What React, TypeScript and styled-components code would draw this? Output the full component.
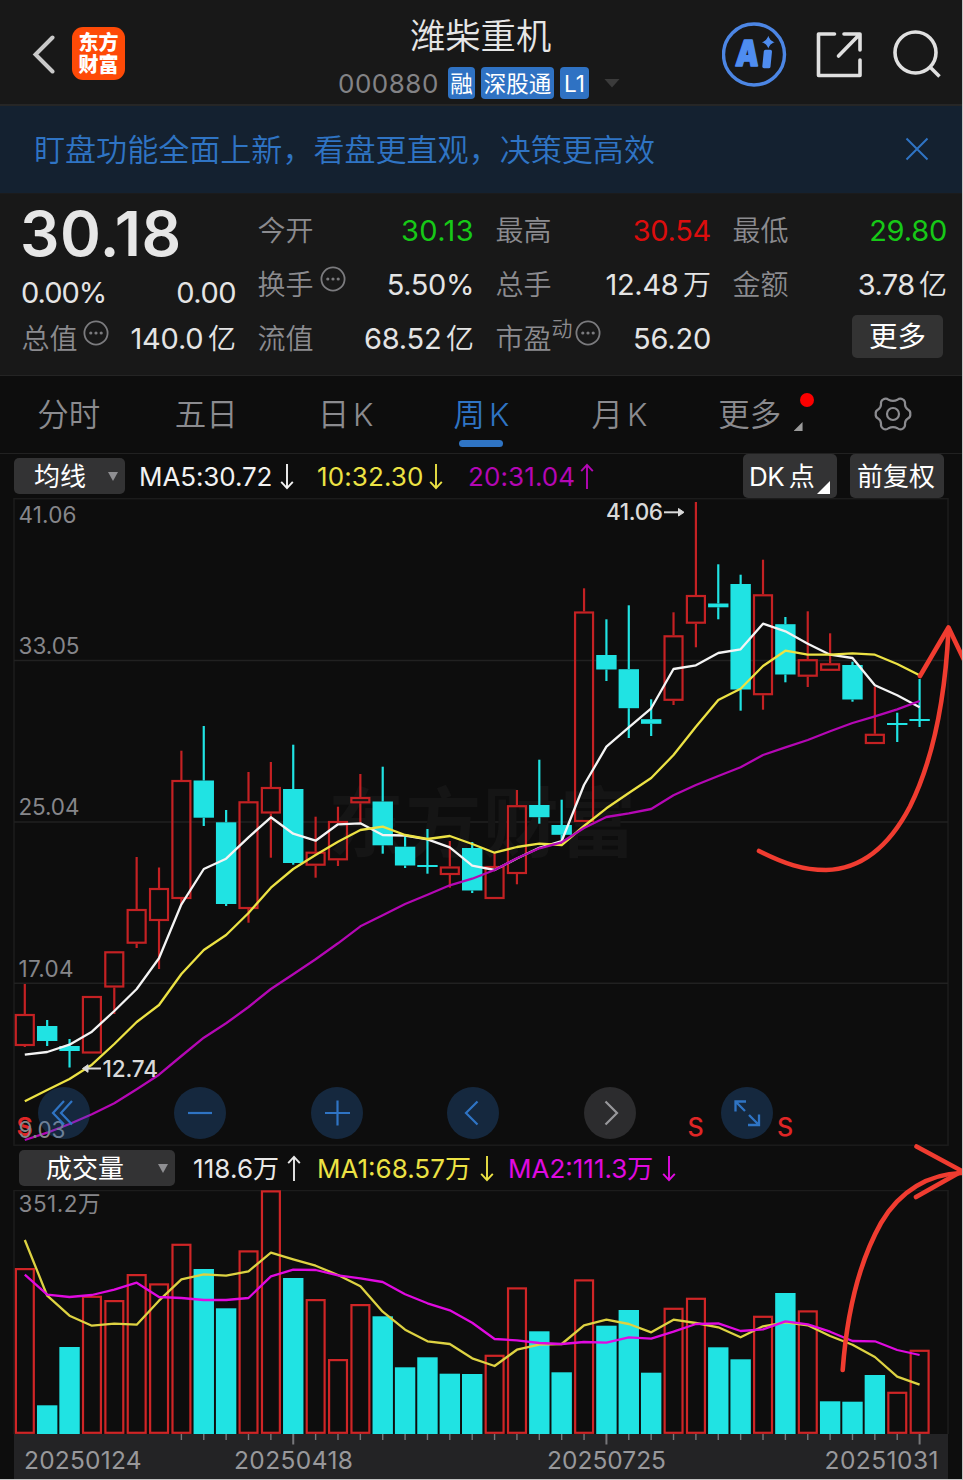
import React from "react";
import styled, { createGlobalStyle } from "styled-components";

const BLUE = "#2f74c4";
const GREY = "#8b8b8f";
const CYAN = "#20e3e3";
const YELLOW = "#ece244";
const MAGENTA = "#b407b4";
const FUCHSIA = "#e00ae0";
const LINE = "#212121";
const FONT = `Inter, "Noto Sans CJK SC", sans-serif`;

const GlobalStyle = createGlobalStyle`
  * { box-sizing: border-box; }
  body { margin: 0; background: #c4c4c4; }
`;

const Screen = styled.main`
  position: relative;
  display: flex;
  flex-direction: column;
  width: 962px;
  height: 1479px;
  overflow: hidden;
  background: #0d0d0d;
  color: #e6e6e6;
  font-family: ${FONT};
  white-space: nowrap;
`;

/* ---------- header ---------- */

const Header = styled.header`
  display: grid;
  grid-template-columns: 338px 1fr 240px;
  height: 106px;
  background: #181818;
  border-bottom: 2px solid #262626;
`;

const HeaderLeft = styled.div`
  display: flex;
  gap: 17px;
  padding: 27px 0 0 32px;
`;

const Logo = styled.div`
  display: flex;
  flex-direction: column;
  align-items: center;
  justify-content: center;
  width: 53px;
  height: 53px;
  padding-top: 1px;
  border-radius: 11px;
  background: #fe4a07;
  color: #fff;
  font-size: 20px;
  font-weight: 800;
  line-height: 22px;
`;

const Title = styled.h1`
  margin: 0;
  padding: 12px 0 0 72px;
  font-size: 35.3px;
  font-weight: 350;
  line-height: 50px;
`;

const SubTitle = styled.div`
  display: flex;
  align-items: center;
  height: 42px;
`;

const Code = styled.span`
  width: 110px;
  color: #838386;
  font-size: 26px;
  letter-spacing: 0.5px;
`;

const Badge = styled.span<{ $w: number }>`
  width: ${(p) => p.$w}px;
  height: 32px;
  margin-right: 6px;
  border-radius: 4px;
  background: #2f72c3;
  color: #fff;
  font-size: 22.5px;
  line-height: 33px;
  text-align: center;
`;

const HeaderRight = styled.div`
  display: flex;
  padding-top: 21px;
`;

/* ---------- banner ---------- */

const Banner = styled.div`
  display: flex;
  align-items: center;
  justify-content: space-between;
  height: 88px;
  padding: 0 33px 5px 34px;
  background: #142130;
  border-bottom: 1px solid #1b1b1c;
  color: ${BLUE};
  font-size: 31.05px;
  font-weight: 350;

  svg {
    margin-top: 4px;
  }
`;

/* ---------- quote ---------- */

const Quote = styled.section`
  display: grid;
  grid-template-columns: 214px 216px 215px 214px;
  column-gap: 22px;
  height: 182px;
  padding: 10px 0 0 22px;
  background: #181818;
  border-bottom: 1px solid #242424;
`;

const QuoteColumn = styled.div`
  display: flex;
  flex-direction: column;
`;

const Price = styled.div`
  height: 62px;
  margin-left: -2px;
  font-size: 62px;
  font-weight: 600;
  line-height: 60px;
  letter-spacing: 0.6px;
`;

const Row = styled.div<{ $h?: number }>`
  display: flex;
  align-items: center;
  height: ${(p) => p.$h ?? 54}px;
`;

const Label = styled.span`
  margin-left: -0.5px;
  color: ${GREY};
  font-size: 28px;
  font-weight: 350;
  line-height: 40px;
`;

const Value = styled.span<{ $color?: string; $track?: number }>`
  margin-left: auto;
  color: ${(p) => p.$color ?? "#e4e4e4"};
  font-size: 29px;
  line-height: 40px;
  letter-spacing: ${(p) => p.$track ?? -0.2}px;
`;

const Unit = styled.span`
  margin-left: 4.5px;
  font-size: 28px;
  font-weight: 350;
  line-height: 1;
  letter-spacing: 0;
`;

const Sup = styled.sup`
  align-self: flex-start;
  margin-top: 5px;
  color: ${GREY};
  font-size: 21px;
  font-weight: 350;
  line-height: 24px;
`;

const InfoIcon = styled.svg<{ $gap: number }>`
  width: 26px;
  height: 26px;
  margin: 0 0 12px ${(p) => p.$gap}px;
`;

const MoreButton = styled.button`
  width: 91px;
  height: 43px;
  margin: 0 4px 6px auto;
  padding: 0;
  border: 0;
  border-radius: 5px;
  background: #333;
  color: #fff;
  font: 400 28.5px/44px ${FONT};
`;

/* ---------- tabs ---------- */

const Tabs = styled.nav`
  display: flex;
  height: 78px;
  border-bottom: 1px solid ${LINE};
`;

const Tab = styled.div<{ $active?: boolean; $shift?: number }>`
  position: relative;
  flex: none;
  width: 137.43px;
  padding-left: ${(p) => p.$shift ?? 0}px;
  color: ${(p) => (p.$active ? BLUE : GREY)};
  font-size: 31.5px;
  font-weight: 350;
  line-height: 77px;
  text-align: center;
  word-spacing: -5px;
  ${(p) =>
    p.$active &&
    `&::after {
      content: "";
      position: absolute;
      left: 47px;
      bottom: 6px;
      width: 44px;
      height: 7px;
      border-radius: 4px;
      background: ${BLUE};
    }`}
`;

const Dot = styled.i`
  position: absolute;
  top: 17px;
  right: 11px;
  width: 14px;
  height: 14px;
  border-radius: 50%;
  background: #fb0000;
`;

const Corner = styled.i<{ $size: number; $right: number; $bottom: number; $color: string }>`
  position: absolute;
  right: ${(p) => p.$right}px;
  bottom: ${(p) => p.$bottom}px;
  width: ${(p) => p.$size}px;
  height: ${(p) => p.$size}px;
  background: ${(p) => p.$color};
  clip-path: polygon(100% 0, 100% 100%, 0 100%);
`;

/* ---------- indicator bars ---------- */

const IndicatorBar = styled.div<{ $h: number; $left: number }>`
  display: flex;
  align-items: center;
  height: ${(p) => p.$h}px;
  padding: 0 18px 0 ${(p) => p.$left}px;
`;

const Picker = styled.div<{ $w: number; $pad: number }>`
  display: flex;
  align-items: center;
  justify-content: space-between;
  width: ${(p) => p.$w}px;
  height: 36px;
  padding: 1px 7px 0 ${(p) => p.$pad}px;
  border-radius: 5px;
  background: #333334;
  color: #fff;
  font-size: 26px;
  line-height: 39px;
`;

const Caret = styled.i<{ $color: string; $w?: number }>`
  width: ${(p) => p.$w ?? 10}px;
  height: 9px;
  background: ${(p) => p.$color};
  clip-path: polygon(0 0, 100% 0, 50% 100%);
`;

const Reading = styled.div<{ $color: string; $w: number; $track?: number }>`
  display: flex;
  align-items: center;
  justify-content: space-between;
  width: ${(p) => p.$w}px;
  height: 36px;
  margin-left: 16px;
  padding-top: 2px;
  color: ${(p) => p.$color};
  font-size: 26px;
  line-height: 36px;
  letter-spacing: ${(p) => p.$track ?? -0.1}px;

  svg {
    margin-bottom: 2px;
  }
`;

const OptionButton = styled.div<{ $gap: string; $track?: number }>`
  position: relative;
  width: 94px;
  height: 44px;
  margin-left: ${(p) => p.$gap};
  padding-left: 7px;
  border-radius: 5px;
  background: #333334;
  color: #fff;
  font-size: 26px;
  line-height: 46px;
  word-spacing: -2px;
  letter-spacing: ${(p) => p.$track ?? 0}px;
`;

/* ---------- charts ---------- */

const PricePane = styled.section`
  position: relative;
  height: 648px;
`;

const Plot = styled.svg`
  display: block;
  width: 962px;
  font-family: ${FONT};
`;

const Controls = styled.div`
  position: absolute;
  left: 37.6px;
  top: 589px;
  display: flex;
  gap: 84.6px;
`;

const RoundButton = styled.div<{ $muted?: boolean }>`
  width: 52px;
  height: 52px;
  border-radius: 50%;
  background: ${(p) => (p.$muted ? "#2c2c2e" : "rgba(46, 116, 196, 0.27)")};
  color: ${(p) => (p.$muted ? "#98989b" : BLUE)};

  svg {
    display: block;
  }
`;

const Annotations = styled.svg`
  position: absolute;
  inset: 0;
  width: 962px;
  height: 1479px;
  pointer-events: none;
`;

/* ---------- data (vertical positions in screen pixels) ---------- */

type Candle = [up: 0 | 1, high: number, top: number, bottom: number, low: number];

const candles: Candle[] = [
  [1, 984, 1014, 1046, 1047], [0, 1020, 1026, 1041, 1046], [0, 1039, 1046, 1051, 1067.5],
  [1, 996, 996, 1053.5, 1053.5], [1, 951.3, 951.3, 987.5, 1014], [1, 857, 909, 943.7, 948],
  [1, 867.5, 888, 921, 969], [1, 750.7, 780, 899, 905], [0, 726, 780.5, 817.7, 826],
  [0, 810, 822.3, 904, 906], [1, 772, 801.3, 909, 922.7], [1, 762, 787, 813.5, 857.7],
  [0, 744.7, 789, 863, 864.7], [1, 816.7, 851.7, 865.7, 877.7], [1, 806.7, 821, 860.3, 866],
  [1, 774, 797, 803.3, 822.7], [0, 766.7, 801.5, 845.3, 853.7], [0, 836.7, 846.7, 865.5, 868],
  [0, 829, 865, 867, 873.7], [1, 841, 866.5, 875, 887.7], [0, 842, 848, 890.5, 893],
  [1, 853, 866, 899, 899], [1, 790, 805.2, 874, 884.3], [0, 759.7, 805, 817.2, 823.7],
  [0, 799.7, 825, 834.8, 840], [1, 588.3, 611.5, 822, 822], [0, 619.3, 655, 669.5, 681],
  [0, 605.3, 669.2, 708.2, 738], [0, 699.3, 719.2, 723.8, 736], [1, 612.3, 635.3, 700.8, 705],
  [1, 502, 595, 623.7, 647.3], [0, 564.3, 603.5, 607.3, 619.3], [0, 574.7, 584, 689.5, 710.7],
  [1, 559.7, 594.3, 695.2, 709.7], [0, 617, 624.2, 674.5, 682.3], [1, 611.3, 659.2, 676.7, 687],
  [1, 633.3, 663.3, 670.8, 670.8], [0, 661.7, 665, 699.5, 701.7], [1, 686.7, 733.8, 744, 744],
  [0, 712.7, 723, 725, 742], [0, 679, 719, 721, 727],
];

const ma5 = [1054.7, 1052, 1044.7, 1031.7, 1011, 989, 958.3, 904.3, 869, 858.7, 837.3, 817.3, 833.7, 840.7, 824.3, 823.3, 835, 835.5, 839.3, 847.3, 865.7, 870, 858.5, 847.8, 841, 785, 746.7, 727.3, 708.3, 669, 665.3, 653, 649.3, 623.7, 631.3, 643.7, 654.7, 658, 685.3, 695.3, 707.3];
const ma10 = [1101.3, 1090, 1079, 1064.7, 1044, 1022, 1005, 974, 950, 935, 913, 887.7, 869, 855, 841.7, 830, 826.7, 835, 839, 836, 844, 852.7, 847, 843.7, 845, 826, 808.3, 793, 778, 755, 726.7, 700, 688.7, 666, 650.7, 654.7, 654.7, 653.3, 654.7, 664, 675.3];
const ma20 = [1140, 1132.7, 1124, 1114.3, 1103.3, 1089.3, 1074.7, 1056, 1037.7, 1023.3, 1007, 989, 974.3, 959.3, 943.3, 926.3, 915.3, 904, 894.7, 885.3, 878.7, 870, 858.3, 848.3, 842.3, 828, 817, 813.3, 809, 795.3, 785, 776, 767.3, 755, 747.3, 740, 731.3, 723, 716.3, 709.3, 701];

const volumeTops = [1268, 1405.3, 1347, 1295.7, 1300, 1274, 1283.3, 1243.7, 1269, 1308.3, 1250.3, 1190.3, 1278, 1299, 1359, 1304, 1316.3, 1367.3, 1357.3, 1373.7, 1374, 1354.7, 1287.3, 1331.3, 1372.3, 1279.3, 1325.7, 1310, 1372.7, 1307.7, 1297.7, 1347.3, 1359.3, 1315.7, 1293, 1310.3, 1401.3, 1401.7, 1375, 1391.7, 1349.7];
const volumeUp = [0, 3, 4, 5, 6, 7, 10, 11, 13, 14, 15, 21, 22, 25, 29, 30, 33, 35, 39, 40];
const volMa1 = [1240, 1295.7, 1315.7, 1325.7, 1323.7, 1324.7, 1300.7, 1279.3, 1274.3, 1275.7, 1271.3, 1252.7, 1259.3, 1265.7, 1275, 1286.3, 1311.7, 1329.7, 1341.3, 1344, 1358.3, 1366, 1349.7, 1344.7, 1344, 1325.3, 1319.7, 1324, 1332.3, 1319.7, 1323, 1327.3, 1337.3, 1326.3, 1322.3, 1325.3, 1336, 1344.7, 1357, 1376.7, 1384.7];
const volMa2 = [1274.7, 1294.7, 1297, 1295, 1289.7, 1282.7, 1297, 1298, 1300, 1300, 1298, 1276.3, 1269.7, 1270, 1275.3, 1278.3, 1282, 1294.3, 1303.3, 1310.3, 1322.7, 1339, 1340.3, 1343, 1344, 1342, 1342.7, 1337.3, 1338.7, 1331.7, 1324, 1323.3, 1331, 1329.3, 1321.3, 1324.3, 1331.7, 1341, 1341.3, 1350, 1355];

const xAt = (i: number) => 24.8 + i * 22.37;

const Curve = ({ ys, color, width = 2.3 }: { ys: number[]; color: string; width?: number }) => (
  <polyline
    points={ys.map((y, i) => `${xAt(i).toFixed(1)},${y}`).join(" ")}
    fill="none"
    stroke={color}
    strokeWidth={width}
    strokeLinejoin="round"
  />
);

const CandleShape = ({ i, c }: { i: number; c: Candle }) => {
  const [up, high, top, bottom, low] = c;
  const x = xAt(i);
  const color = up ? "#c42123" : CYAN;
  return (
    <g stroke={color} strokeWidth={2.2}>
      {high < top && <line x1={x} x2={x} y1={high} y2={top} />}
      {low > bottom && <line x1={x} x2={x} y1={bottom} y2={low} />}
      {up ? (
        <rect x={x - 9} y={top + 1} width={18} height={Math.max(bottom - top - 2, 1)} fill="none" />
      ) : (
        <rect x={x - 10.2} y={top} width={20.4} height={bottom - top} fill={CYAN} stroke="none" />
      )}
    </g>
  );
};

type LabelProps = { x: number; y: number; w: number; children: string; color?: string; size?: number; weight?: number };
const PlotLabel = ({ x, y, w, children, color = "#86868a", size = 22.5, weight = 400 }: LabelProps) => (
  <text x={x} y={y} textLength={w} fill={color} fontSize={size} fontWeight={weight}>
    {children}
  </text>
);

const Trend = ({ up }: { up?: boolean }) => (
  <svg width="14" height="27" viewBox="0 0 14 27" fill="none" stroke="currentColor" strokeWidth="1.9">
    <path d={up ? "M7 26V2M1.2 8.2 7 1.8l5.8 6.4" : "M7 1v24M1.2 18.8 7 25.2l5.8-6.4"} />
  </svg>
);

const Info = ({ gap }: { gap: number }) => (
  <InfoIcon $gap={gap} viewBox="0 0 26 26" fill="none" stroke="#7b7b7e" strokeWidth="1.8">
    <circle cx="13" cy="13" r="11.6" />
    <g fill="#7b7b7e" stroke="none">
      <circle cx="7.8" cy="13" r="1.6" />
      <circle cx="13" cy="13" r="1.6" />
      <circle cx="18.2" cy="13" r="1.6" />
    </g>
  </InfoIcon>
);

const controls: { d: string; muted?: boolean; w?: number }[] = [
  { d: "M26 14 15 26l11 11.5M34 14 23 26l11 11.5" },
  { d: "M14 26h24" },
  { d: "M14 26h25M26.5 13.5v25" },
  { d: "M30.5 14.5 19 26l11.5 11.5" },
  { d: "M21.5 14.5 33 26 21.5 37.5", muted: true },
  { d: "M14.5 24.5V14.500H25M14.5 14.5 24 24M38 27.5V38H27M38 38 28 28", w: 2.3 },
];

export default function App() {
  return (
    <>
      <GlobalStyle />
      <Screen>
        <Header>
          <HeaderLeft>
            <svg width="23" height="54" viewBox="0 0 23 54" fill="none" stroke="#c9c9c9" strokeWidth="4">
              <path d="M20.500 10.500 3.500 27.500 20.500 44.500" strokeLinecap="round" />
            </svg>
            <Logo>
              <span>东方</span>
              <span>财富</span>
            </Logo>
          </HeaderLeft>
          <div>
            <Title>潍柴重机</Title>
            <SubTitle>
              <Code>000880</Code>
              <Badge $w={27}>融</Badge>
              <Badge $w={73}>深股通</Badge>
              <Badge $w={29}>L1</Badge>
              <Caret $color="#3b3b3b" $w={16} style={{ marginLeft: 9 }} />
            </SubTitle>
          </div>
          <HeaderRight>
            <svg width="240" height="68" viewBox="722 21 240 68" fill="none" stroke="#e0e0e0" strokeWidth="3.6">
              <circle cx="754" cy="54.500" r="30.500" stroke="#4c86e4" strokeWidth="3.400" />
              <g fill="#4f8df0" stroke="#4f8df0">
                <text fontSize="34" fontWeight="900" fontFamily="Inter" strokeWidth="1.500" strokeLinejoin="round" transform="translate(735 66) skewX(-4) scale(0.86 1.05)">
                  A
                </text>
                <path d="M765.500 51.500h4.800l-1.500 15h-4.800z" strokeWidth="3.400" strokeLinejoin="round" />
                <path d="M768.300 37.500q1.300 3.400 4.700 4.700-3.400 1.300-4.700 4.700-1.300-3.400-4.700-4.700 3.400-1.300 4.700-4.700z" strokeWidth="1.200" />
              </g>
              <path d="M834.500 34H818.500V75.500H860V60M844 34H860V50M859.500 34.500 838.500 56" strokeLinecap="round" strokeLinejoin="round" />
              <circle cx="915.500" cy="52.500" r="20.500" />
              <path d="M930.500 67.500 939.500 76.500" />
            </svg>
          </HeaderRight>
        </Header>

        <Banner>
          <span>盯盘功能全面上新，看盘更直观，决策更高效</span>
          <svg width="24" height="24" viewBox="0 0 24 24" stroke="currentColor" strokeWidth="2">
            <path d="M1.500 1.500l21 21M22.500 1.500l-21 21" />
          </svg>
        </Banner>

        <Quote>
          <QuoteColumn>
            <Price>30.18</Price>
            <Row $h={53}>
              <Value $track={-1} style={{ marginLeft: -1 }}>0.00%</Value>
              <Value $track={-0.5}>0.00</Value>
            </Row>
            <Row $h={39}>
              <Label>总值</Label>
              <Info gap={5} />
              <Value>140.0<Unit>亿</Unit></Value>
            </Row>
          </QuoteColumn>
          <QuoteColumn>
            <Row>
              <Label>今开</Label>
              <Value $color="#17c917" $track={0.4}>30.13</Value>
            </Row>
            <Row>
              <Label>换手</Label>
              <Info gap={6.5} />
              <Value $track={-0.4}>5.50%</Value>
            </Row>
            <Row>
              <Label>流值</Label>
              <Value>68.52<Unit>亿</Unit></Value>
            </Row>
          </QuoteColumn>
          <QuoteColumn>
            <Row>
              <Label>最高</Label>
              <Value $color="#dc0d0d" $track={-0.3}>30.54</Value>
            </Row>
            <Row>
              <Label>总手</Label>
              <Value $track={-0.3}>12.48<Unit>万</Unit></Value>
            </Row>
            <Row>
              <Label>市盈</Label>
              <Sup>动</Sup>
              <Info gap={2.5} />
              <Value>56.20</Value>
            </Row>
          </QuoteColumn>
          <QuoteColumn>
            <Row>
              <Label>最低</Label>
              <Value $color="#17c917">29.80</Value>
            </Row>
            <Row>
              <Label>金额</Label>
              <Value $track={-0.6}>3.78<Unit>亿</Unit></Value>
            </Row>
            <Row>
              <MoreButton>更多</MoreButton>
            </Row>
          </QuoteColumn>
        </Quote>

        <Tabs>
          <Tab>分时</Tab>
          <Tab>五日</Tab>
          <Tab $shift={4}>日 K</Tab>
          <Tab $active $shift={1}>周 K</Tab>
          <Tab $shift={2}>月 K</Tab>
          <Tab style={{ paddingRight: 12 }}>
            更多
            <Dot />
            <Corner $size={9} $right={22} $bottom={22} $color="#9a9a9a" />
          </Tab>
          <Tab>
            <svg width="38" height="36" viewBox="-19 -18 38 36" fill="none" stroke={GREY} strokeWidth="2.2" style={{ verticalAlign: "middle", marginTop: -6 }}>
              <path
                strokeLinejoin="round"
                d="M-4.500 -14.200Q0 -12 4.500 -14.200Q7 -16.500 10.200 -14.300Q12.500 -12.800 12 -9.500Q12.200 -6 15.200 -4.200Q17.600 -3 17.300 0Q17.600 3 15.200 4.200Q12.200 6 12 9.500Q12.500 12.800 10.200 14.300Q7 16.500 4.500 14.200Q0 12 -4.500 14.200Q-7 16.500 -10.200 14.300Q-12.500 12.800 -12 9.500Q-12.200 6 -15.200 4.200Q-17.600 3 -17.300 0Q-17.600 -3 -15.200 -4.200Q-12.200 -6 -12 -9.500Q-12.500 -12.800 -10.200 -14.300Q-7 -16.500 -4.500 -14.200Z"
              />
              <circle r="6" />
            </svg>
          </Tab>
        </Tabs>

        <IndicatorBar $h={44} $left={14}>
          <Picker $w={111} $pad={20}>
            均线
            <Caret $color="#8f8f92" />
          </Picker>
          <Reading $color="#f2f2f2" $w={155} style={{ marginLeft: 14 }}>
            MA5:30.72
            <Trend />
          </Reading>
          <Reading $color={YELLOW} $w={126} $track={0.1} style={{ marginLeft: 23 }}>
            10:32.30
            <Trend />
          </Reading>
          <Reading $color={MAGENTA} $w={126} $track={0.1} style={{ marginLeft: 25 }}>
            20:31.04
            <Trend up />
          </Reading>
          <OptionButton $gap="auto" $track={-0.6} style={{ paddingLeft: 6 }}>
            DK 点
            <Corner $size={13} $right={7} $bottom={4} $color="#fff" />
          </OptionButton>
          <OptionButton $gap="13px">前复权</OptionButton>
        </IndicatorBar>

        <PricePane>
          <Plot height={648} viewBox="0 498 962 648">
            <g stroke={LINE} strokeWidth="1.5" fill="none">
              <rect x="14" y="498.700" width="934" height="646.500" stroke="#1c1c1c" />
              <path d="M14 660.500H948M14 822H948M14 983.300H948" />
            </g>
            <text x="328" y="851" textLength="308" fontSize="76" fontWeight="700" fill="#151515">
              东方财富
            </text>
            <PlotLabel x={18.5} y={522.5} w={58}>41.06</PlotLabel>
            <PlotLabel x={18.5} y={653.5} w={61}>33.05</PlotLabel>
            <PlotLabel x={18.5} y={815} w={61}>25.04</PlotLabel>
            <PlotLabel x={18.5} y={977} w={55}>17.04</PlotLabel>
            {candles.map((c, i) => (
              <CandleShape key={i} i={i} c={c} />
            ))}
            <Curve ys={ma5} color="#f4f4f4" />
            <Curve ys={ma10} color={YELLOW} />
            <Curve ys={ma20} color={MAGENTA} />
            <g stroke="#dadada" strokeWidth="2" fill="#dadada">
              <path d="M664 512.300H679" />
              <path d="M678.500 508.500 684 512.300 678.500 516z" strokeWidth="1" />
              <path d="M87 1068.500H101" />
              <path d="M88 1064.700 82.500 1068.500 88 1072.300z" strokeWidth="1" />
            </g>
            <PlotLabel x={606} y={520.3} w={57} color="#dadada" weight={500}>41.06</PlotLabel>
            <PlotLabel x={102.5} y={1077} w={55.5} color="#dadada" weight={500}>12.74</PlotLabel>
            <PlotLabel x={16.5} y={1136} w={16} color="#e02626" size={25} weight={600}>S</PlotLabel>
            <PlotLabel x={687.5} y={1135.5} w={16} color="#e02626" size={25} weight={500}>S</PlotLabel>
            <PlotLabel x={777} y={1135.5} w={16} color="#e02626" size={25} weight={500}>S</PlotLabel>
            <PlotLabel x={18.5} y={1137.5} w={47}>9.03</PlotLabel>
          </Plot>
          <Controls>
            {controls.map(({ d, muted, w }) => (
              <RoundButton key={d} $muted={muted}>
                <svg width="52" height="52" viewBox="0 0 52 52" fill="none" stroke="currentColor" strokeWidth={w ?? 2.2}>
                  <path d={d} />
                </svg>
              </RoundButton>
            ))}
          </Controls>
        </PricePane>

        <IndicatorBar $h={44} $left={19}>
          <Picker $w={156} $pad={27}>
            成交量
            <Caret $color="#8f8f92" />
          </Picker>
          <Reading $color="#e8e8e8" $w={108} $track={0.1} style={{ marginLeft: 18 }}>
            118.6万
            <Trend up />
          </Reading>
          <Reading $color={YELLOW} $w={177} $track={0}>
            MA1:68.57万
            <Trend />
          </Reading>
          <Reading $color={FUCHSIA} $w={168} $track={0} style={{ marginLeft: 14 }}>
            MA2:111.3万
            <Trend />
          </Reading>
        </IndicatorBar>

        <Plot height={289} viewBox="0 1190 962 289">
          <path d="M14 1434V1190.500H948V1434" fill="none" stroke="#1c1c1c" strokeWidth="1.5" />
          <rect x="14" y="1434" width="934" height="45" fill="#232325" />
          <PlotLabel x={18.5} y={1212.3} w={82}>351.2万</PlotLabel>
          {volumeTops.map((top, i) =>
            volumeUp.includes(i) ? (
              <rect key={i} x={xAt(i) - 8.9} y={top + 1.1} width={17.9} height={1432.8 - top - 1.1} fill="none" stroke="#cf2526" strokeWidth="2.2" />
            ) : (
              <rect key={i} x={xAt(i) - 10.2} y={top} width={20.4} height={1434 - top} fill={CYAN} />
            )
          )}
          {volumeTops.map((_, i) => {
            const major = i === 12 || i === 26 || i === 40;
            return i > 6 ? (
              <line key={i} x1={xAt(i)} x2={xAt(i)} y1={1434} y2={major ? 1444.5 : 1440} stroke="#77777a" strokeWidth={major ? 2 : 1.4} />
            ) : null;
          })}
          <Curve ys={volMa1} color="#ddd242" />
          <Curve ys={volMa2} color={FUCHSIA} />
          <PlotLabel x={24} y={1469} w={117.500} color="#98989b" size={24.5}>20250124</PlotLabel>
          <PlotLabel x={234} y={1469} w={119} color="#98989b" size={24.5}>20250418</PlotLabel>
          <PlotLabel x={547} y={1469} w={119} color="#98989b" size={24.5}>20250725</PlotLabel>
          <PlotLabel x={824.5} y={1469} w={114} color="#98989b" size={24.5}>20251031</PlotLabel>
        </Plot>

        <Annotations viewBox="0 0 962 1479" fill="none" stroke="#f03c30" strokeWidth="4.600" strokeLinecap="round" strokeLinejoin="round">
          <path d="M759 851C785 864 803 870 826 870C869 869 894 837 910 806.500C933 760 945 700 948.500 630" />
          <path d="M920 676 948.500 627.500 965 662" />
          <path d="M842.700 1370C847 1312 858 1264 881 1223C900 1190 930 1174 961 1173" />
          <path d="M916.500 1146.500 962 1171 916 1197" />
        </Annotations>
      </Screen>
    </>
  );
}
